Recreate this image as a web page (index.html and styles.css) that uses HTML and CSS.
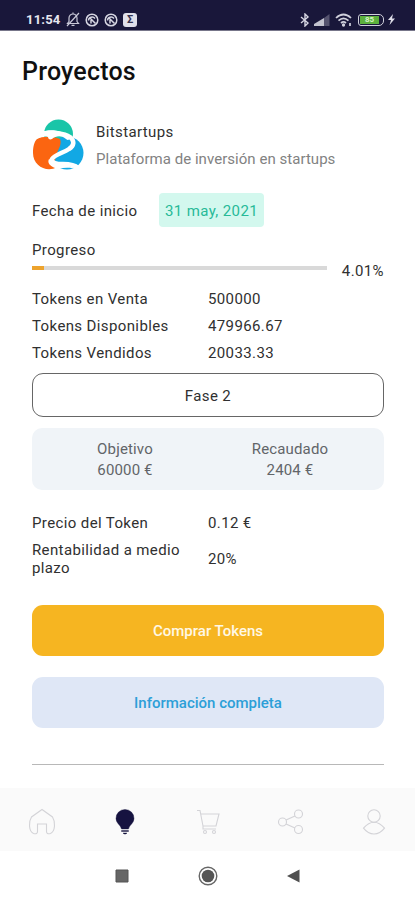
FILE: index.html
```html
<!DOCTYPE html>
<html lang="es">
<head>
<meta charset="utf-8">
<meta name="viewport" content="width=device-width, initial-scale=1">
<title>Proyectos</title>
<link rel="stylesheet" href="styles.css">
</head>
<body>
<header class="status">
  <div class="status-left">
    <span class="time">11:54</span>
    <svg width="14" height="15" viewBox="0 0 14 15" fill="none" stroke="#c9c9d8" stroke-width="1.2"><path d="M1.5 11.5h11L11 9.5V6a4 4 0 0 0-8 0v3.500zM7 2V.5M5.500 13.300h3M1 14 13 1"/></svg>
    <svg width="14" height="14" viewBox="0 0 14 14" fill="none" stroke="#d6d6e2" stroke-width="1.500"><circle cx="7" cy="7" r="5.800"/><path d="M3.500 7.500C3.500 4 8 3 10 5.500M4.500 4.500l6 6M6 7v3.500"/></svg>
    <svg width="14" height="14" viewBox="0 0 14 14" fill="none" stroke="#d6d6e2" stroke-width="1.500"><circle cx="7" cy="7" r="5.800"/><path d="M3.500 7.500C3.500 4 8 3 10 5.500M4.500 4.500l6 6M6 7v3.500"/></svg>
    <span class="sigma">Σ</span>
  </div>
  <div class="status-right">
    <svg width="10" height="14" viewBox="0 0 10 14" fill="none" stroke="#d6d6e2" stroke-width="1.400"><path d="m1 4 7 6-3 3V1l3 3-7 6"/></svg>
    <svg class="signal" width="16" height="12" viewBox="0 0 16 12"><path fill="#55536f" d="M15.500 0v12H10V4z"/><path fill="#c3c3cf" d="M0 12v-2l10-6v8z"/></svg>
    <svg class="wifi" width="18" height="14" viewBox="0 0 18 14" fill="none" stroke="#d0d0dc" stroke-width="1.700"><path d="M1 5q7.500-7 15 0M3.500 7.600q5-4.600 10 0M6 10q2.500-2.200 5 0"/><circle cx="8.500" cy="12" r=".8"/><path d="M15 10v3"/></svg>
    <span class="battery"><span class="charge">85</span></span>
    <svg class="bolt" width="7" height="11" viewBox="0 0 7 11"><path fill="#dedee8" d="M5 0 0 6h3L1.500 11 7 4.500H4z"/></svg>
  </div>
</header>

<main>
  <h1>Proyectos</h1>
  <article class="project">
    <div class="identity">
      <svg class="logo" width="52" height="52" viewBox="0 0 52 52">
        <circle cx="26.500" cy="15" r="14.500" fill="#19c5a8"/>
        <circle cx="35" cy="34" r="16.500" fill="#12a8e4"/>
        <path fill="#fb6511" d="M5 20c5-3 16-3 23 0 2 5-1 9-3 14-2 5-3 10 0 14C15 54 1 47 1 34c0-6 1-11 4-14z"/>
        <path fill="none" stroke="#fff" stroke-width="4.500" stroke-linecap="round" stroke-linejoin="round" d="M12 14.500c9-1.500 20-.5 26 3.500 5 4 4 9-1 12-6 4-15 6-17 10-1 4 5 5 11 5 7 0 12 1 15 4"/>
        <path fill="#fff" d="M9 13c11-4 22-1 28 5 1 3-1 4-3 2-5-4-10-3-14 0-2 1-4 0-4-2-4-1-8 0-11 2 1-3 2-5 4-7zM17 40c-2 4 1 7 6 9 7 1 14-2 23 2-8-5-13-5-20-6z"/>
      </svg>
      <div class="names"><h2>Bitstartups</h2><p>Plataforma de inversión en startups</p></div>
    </div>
    <div class="start"><span class="start-label">Fecha de inicio</span><time class="chip" datetime="2021-05-31">31 may, 2021</time></div>
    <div class="progress-label">Progreso</div>
    <div class="progress"><div class="track"><div class="fill" style="width:4.010%"></div></div><span class="percent">4.01%</span></div>
    <dl class="facts">
      <dt>Tokens en Venta</dt><dd>500000</dd>
      <dt>Tokens Disponibles</dt><dd>479966.67</dd>
      <dt>Tokens Vendidos</dt><dd>20033.33</dd>
    </dl>
    <div class="phase">Fase 2</div>
    <div class="totals"><div>Objetivo<br>60000 €</div><div>Recaudado<br>2404 €</div></div>
    <dl class="facts terms">
      <dt>Precio del Token</dt><dd>0.12 €</dd>
      <dt class="two-line">Rentabilidad a medio plazo</dt><dd>20%</dd>
    </dl>
    <button class="btn buy">Comprar Tokens</button>
    <button class="btn info">Información completa</button>
    <hr>
  </article>
</main>

<nav class="tabs">
  <svg width="28" height="28" viewBox="0 0 28 28"><path d="M14 1.500 3.500 9Q1 13 1.500 18q.5 6 4 7.500 4 1 4-2V16h9v7.500q0 3 4 2 3.500-1.500 4-7.500.5-5-2-9z"/></svg>
  <svg class="active" width="28" height="28" viewBox="0 0 28 28"><path d="M14 1.500a8.800 8.800 0 0 0-9 9c0 5 4.500 6 5.500 10.500h7C18.500 16.500 23 15.500 23 10.500a8.800 8.800 0 0 0-9-9zM10.500 22.500h7v1h-7zM12 25h4l-1 1h-2z"/></svg>
  <svg width="28" height="28" viewBox="0 0 28 28"><path d="M3 2.500h3L9 18h13l3-12H6.700M9 18v3h13"/><circle cx="11" cy="24" r="1.500"/><circle cx="20" cy="24" r="1.500"/></svg>
  <svg width="28" height="28" viewBox="0 0 28 28"><circle cx="5.500" cy="14" r="4"/><circle cx="21.500" cy="6" r="4"/><circle cx="21.500" cy="21.500" r="4"/><path d="m9 12 9-4M9 16l9 4"/></svg>
  <svg width="28" height="28" viewBox="0 0 28 28"><circle cx="14" cy="8" r="6.200"/><path d="M14 14.200c-4 0-8 3-10.500 6Q8 26 14 26t10.500-5.800c-2.500-3-6.500-6-10.500-6z"/></svg>
</nav>
<footer class="system">
  <svg width="20" height="20" viewBox="0 0 20 20"><path fill="#666" stroke="#555" d="M4 4h12v12H4z"/></svg>
  <svg width="20" height="20" viewBox="0 0 20 20"><circle cx="10" cy="10" r="8.800" fill="none" stroke="#666" stroke-width="1.400"/><circle cx="10" cy="10" r="6.300" fill="#555"/></svg>
  <svg width="20" height="20" viewBox="0 0 20 20"><path fill="#505050" d="M3 10 15.500 3.500v13z"/></svg>
</footer>
</body>
</html>
```
FILE: styles.css
```css
* { box-sizing: border-box; }
body {
  margin: 0;
  height: 900px;
  display: flex;
  flex-direction: column;
  background: #fff;
  color: #303030;
  font: 15px/20px Roboto, sans-serif;
  letter-spacing: .38px;
}
h1, h2, p, dl, dd { margin: 0; }
svg { display: block; flex: none; }

.status {
  height: 31px;
  padding: 9px 20px 0 26px;
  display: flex;
  justify-content: space-between;
  background: #19173a;
  border-bottom: 1px solid #77768a;
}
.status-left, .status-right { display: flex; align-items: center; height: 21px; }
.status-left { gap: 5px; }
.time { width: 35px; font-size: 13px; font-weight: 700; letter-spacing: .2px; color: #e6e6ef; }
.sigma {
  width: 14px;
  height: 14px;
  border-radius: 3px;
  background: #e0e0ea;
  color: #34324f;
  font-size: 11px;
  font-weight: 700;
  line-height: 14px;
  letter-spacing: 0;
  text-align: center;
}
.signal { margin-left: 4px; }
.wifi { margin-left: 5px; }
.battery {
  width: 26px;
  height: 12px;
  margin-left: 5px;
  padding: 1px;
  border: 1.500px solid #d0d0dc;
  border-radius: 3px 5px 5px 3px;
}
.charge {
  display: block;
  width: 19px;
  height: 8px;
  background: #5cb03d;
  color: #d5f5c5;
  font-size: 8px;
  font-weight: 700;
  line-height: 8px;
  letter-spacing: 0;
  text-align: center;
}
.bolt { margin-left: 4px; }

main { height: 757px; }
h1 {
  padding: 26px 22px 0;
  font-size: 25px;
  font-weight: 500;
  line-height: 30px;
  letter-spacing: .2px;
  color: #101010;
}
.project { display: flex; flex-direction: column; padding: 32px 31px 0 32px; }
.identity { display: flex; height: 52px; }
.names { margin-left: 12px; padding-top: 3px; }
h2 { font-size: 15px; font-weight: 400; line-height: 20px; }
.names p { margin-top: 7px; color: #828282; letter-spacing: .04px; }
.start { display: flex; align-items: center; height: 34px; margin-top: 22px; }
.start-label { width: 127px; padding-top: 2px; }
.chip {
  width: 105px;
  border-radius: 4px;
  background: #d3f8ee;
  color: #27ba98;
  line-height: 36px;
  height: 34px;
  text-align: center;
}
.progress-label { margin-top: 13px; }
.progress { display: flex; height: 21px; justify-content: space-between; }
.track { width: 295px; height: 4px; margin-top: 6px; background: #d9d9d9; }
.fill { height: 4px; background: #eda32d; }
.percent { margin-top: 1px; }
.facts {
  display: grid;
  grid-template-columns: 176px 1fr;
  row-gap: 7px;
  align-items: center;
  margin-top: 8px;
}
.phase {
  height: 44px;
  margin-top: 10px;
  border: 1px solid #666;
  border-radius: 11px;
  line-height: 44px;
  text-align: center;
}
.totals {
  height: 62px;
  margin-top: 11px;
  padding-top: 11px;
  display: grid;
  grid-template-columns: 1fr 1fr;
  border-radius: 10px;
  background: #f0f4f8;
  color: #626569;
  line-height: 20.500px;
  letter-spacing: .15px;
  text-align: center;
}
.totals div:first-child { padding-left: 10px; }
.totals div:last-child { padding-right: 12px; }
.terms { margin-top: 23px; }
.two-line { padding-top: 1px; line-height: 18px; }
.btn {
  height: 51px;
  padding: 1px 0 0;
  border: 0;
  border-radius: 11px;
  font: 500 15px/20px Roboto, sans-serif;
  letter-spacing: 0;
}
.buy { margin-top: 28px; background: #f6b521; color: #fff8e5; }
.info { margin-top: 21px; background: #dfe7f6; color: #2c9fd8; }
hr { width: 100%; height: 1px; margin: 36px 0 0; border: 0; background: #b8b8b8; }

.tabs {
  height: 63px;
  padding: 4px 27px 0 28px;
  display: flex;
  align-items: center;
  justify-content: space-between;
  background: #fafafa;
}
.tabs svg { fill: none; stroke: #d3d3d7; stroke-width: 1.100; }
.tabs .active { fill: #161340; stroke: #161340; stroke-width: .4; }
.system {
  height: 49px;
  padding-left: 1px;
  display: flex;
  align-items: center;
  justify-content: center;
  gap: 66px;
}
```
